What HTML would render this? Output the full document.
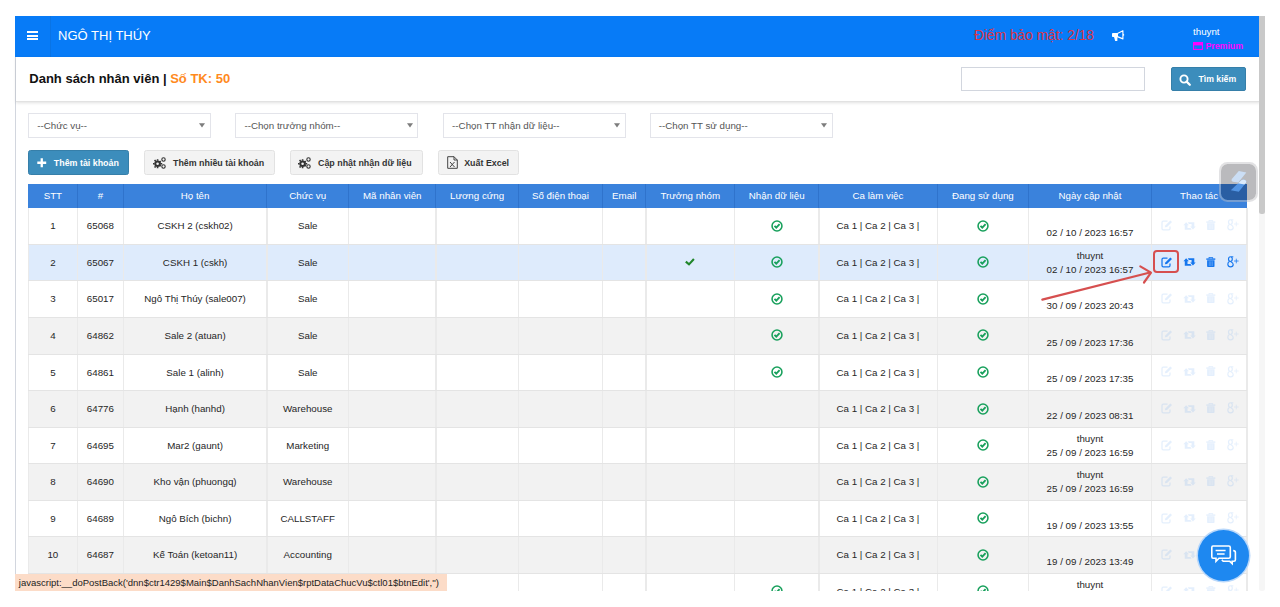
<!DOCTYPE html>
<html><head><meta charset="utf-8">
<style>
*{box-sizing:border-box;margin:0;padding:0}
html,body{width:1280px;height:607px;overflow:hidden;background:#fff;font-family:"Liberation Sans",sans-serif;color:#333}
.abs{position:absolute}
#hdr{position:absolute;left:15px;top:16px;width:1244.5px;height:40.8px;background:#077bf7}
#hdr .sep{position:absolute;left:34.5px;top:0;width:1px;height:40.8px;background:#0b6fd9;opacity:.6}
.bar{position:absolute;left:12px;width:11px;height:2px;background:#fff}
#ttl{position:absolute;left:43.1px;top:12px;font-size:13px;color:#fff;white-space:nowrap;line-height:15px}
#leftline{position:absolute;left:15px;top:56.8px;width:1px;height:517px;background:#d2d6de}
#panel{position:absolute;left:16px;top:56.8px;width:1243.5px;height:45.3px;background:#fff;border-bottom:1px solid #e2e2e2;box-shadow:0 1px 3px rgba(0,0,0,.12)}
.title{position:absolute;left:29.3px;top:70.9px;font-size:13px;font-weight:bold;color:#111;white-space:nowrap;line-height:15px}
.title span{color:#ff8a1e}
.sel{position:absolute;top:112.8px;height:24.9px;width:183px;border:1px solid #e3e4ea;background:#fff;font-size:9.75px;color:#555;line-height:23px;padding-left:8px;white-space:nowrap}
.sel svg{position:absolute;right:4.8px;top:9.3px}
.btn{position:absolute;top:150.1px;height:24.9px;border:1px solid #e2e2e2;border-radius:2.5px;background:#f3f3f3;font-size:8.9px;font-weight:bold;color:#333;line-height:24.2px;white-space:nowrap}
.btn svg{position:absolute}
.btn b{position:absolute;top:0}
.th{position:absolute;top:184.3px;height:23.3px;padding-bottom:1.5px;color:#fff;font-size:9.75px;text-align:center;line-height:23px;white-space:nowrap}
.row{position:absolute;left:28.3px;width:1218.5px}
.td{position:absolute;top:0;height:100%;padding-top:0.6px;font-size:9.75px;color:#262626;text-align:center;white-space:nowrap;display:flex;align-items:center;justify-content:center;line-height:13.8px}
.td2{flex-direction:column}
.ic{position:absolute}
</style></head><body>

<div id="hdr"><div class="sep"></div><div class="bar" style="top:15.2px"></div><div class="bar" style="top:18.7px"></div><div class="bar" style="top:22.2px"></div><div id="ttl">NGÔ THỊ THÚY</div><div class="abs" style="left:959px;top:11.7px;font-size:13.75px;color:#dc3545;white-space:nowrap;line-height:16px">Điểm bảo mật: 2/18</div><svg class="abs" style="left:1096px;top:13px" width="14" height="13" viewBox="0 0 14 13"><path d="M1.8 4 H6.6 V8.1 H1.8 Q1 8.1 1 7.3 V4.8 Q1 4 1.8 4 Z" fill="#fff"/><path d="M3 8 H6.5 L6.3 11.9 H4.2 Z" fill="#fff"/><path d="M6.4 4.4 L11.9 1.7 V9.9 L6.4 7.6 Z" fill="none" stroke="#fff" stroke-width="1.15" stroke-linejoin="round"/><rect x="12.1" y="4.9" width="1" height="1.8" fill="#fff"/></svg><div class="abs" style="left:1178px;top:9.6px;font-size:9.75px;color:#fff;white-space:nowrap;line-height:12px">thuynt</div><svg class="abs" style="left:1177.5px;top:26.4px" width="10" height="8" viewBox="0 0 10 8"><rect x="0.55" y="0.55" width="8.9" height="6.9" fill="none" stroke="#f0f" stroke-width="1.1"/><rect x="0.5" y="0.5" width="9" height="2.9" fill="#f0f"/><rect x="1.8" y="5.6" width="2" height="0.8" fill="#f0f" fill-opacity="0.6"/></svg><div class="abs" style="left:1190.4px;top:24.3px;font-size:8.8px;font-weight:bold;color:#f0f;white-space:nowrap;line-height:12px">Premium</div></div>
<div id="leftline"></div>
<div id="panel"></div>
<div class="title">Danh sách nhân viên | <span>Số TK: 50</span></div>
<div class="abs" style="left:961px;top:67.3px;width:184px;height:24px;border:1px solid #d2d6de;background:#fff"></div>
<div class="abs" style="left:1171px;top:67.3px;width:74.8px;height:23.8px;background:#3c8dbc;border:1px solid #367fa9;border-radius:2px"></div>
<svg class="abs" style="left:1179px;top:73.5px" width="12" height="12" viewBox="0 0 12 12"><circle cx="5" cy="5" r="3.6" fill="none" stroke="#fff" stroke-width="1.9"/><path d="M7.6 7.6 L10.8 10.8" stroke="#fff" stroke-width="2.2" stroke-linecap="round"/></svg>
<div class="abs" style="left:1198.5px;top:73px;font-size:8.7px;font-weight:bold;color:#fff;white-space:nowrap;line-height:12px">Tìm kiếm</div>
<div class="sel" style="left:28.2px">--Chức vụ--<svg width="6" height="5" viewBox="0 0 6 5"><path d="M0 0.2 H6 L3 4.6 Z" fill="#7d7d7d"/></svg></div>
<div class="sel" style="left:235.4px">--Chọn trưởng nhóm--<svg width="6" height="5" viewBox="0 0 6 5"><path d="M0 0.2 H6 L3 4.6 Z" fill="#7d7d7d"/></svg></div>
<div class="sel" style="left:443.1px">--Chọn TT nhận dữ liệu--<svg width="6" height="5" viewBox="0 0 6 5"><path d="M0 0.2 H6 L3 4.6 Z" fill="#7d7d7d"/></svg></div>
<div class="sel" style="left:649.7px">--Chọn TT sử dụng--<svg width="6" height="5" viewBox="0 0 6 5"><path d="M0 0.2 H6 L3 4.6 Z" fill="#7d7d7d"/></svg></div>
<div class="btn" style="left:28.3px;width:100.7px;background:#3c8dbc;border-color:#367fa9;color:#fff"><svg style="left:7.9px;top:6.8px" width="10" height="10" viewBox="0 0 10 10"><path d="M3.6 0.3 H5.9 V3.6 H9.2 V5.9 H5.9 V9.2 H3.6 V5.9 H0.3 V3.6 H3.6 Z" fill="#fff"/></svg><b style="left:24.5px">Thêm tài khoản</b></div>
<div class="btn" style="left:144.4px;width:130.4px"><svg style="left:7.5px;top:6px" width="13" height="12" viewBox="0 0 13 12"><g fill="#333"><circle cx="4.6" cy="6.8" r="3.3"/><path d="M3.8 2.3h1.6v1.5h-1.6zM3.8 9.8h1.6v1.5h-1.6zM0 6h1.5v1.6H0zM7.7 6h1.5v1.6H7.7zM1 3.6l1.1-1.1 1.1 1.1-1.1 1.1zM6.1 8.7l1.1-1.1 1.1 1.1-1.1 1.1zM1 9.9l1.1-1.1 1.1 1.1-1.1 1.1zM6.1 4.7l1.1-1.1 1.1 1.1-1.1 1.1z"/></g><circle cx="4.6" cy="6.8" r="1.3" fill="#f4f4f4"/><circle cx="10.5" cy="2.5" r="1.7" fill="none" stroke="#333" stroke-width="1.1"/><circle cx="10.5" cy="9.5" r="1.7" fill="none" stroke="#333" stroke-width="1.1"/></svg><b style="left:27.6px">Thêm nhiều tài khoản</b></div>
<div class="btn" style="left:290.2px;width:132.5px"><svg style="left:7px;top:6px" width="13" height="12" viewBox="0 0 13 12"><g fill="#333"><circle cx="4.6" cy="6.8" r="3.3"/><path d="M3.8 2.3h1.6v1.5h-1.6zM3.8 9.8h1.6v1.5h-1.6zM0 6h1.5v1.6H0zM7.7 6h1.5v1.6H7.7zM1 3.6l1.1-1.1 1.1 1.1-1.1 1.1zM6.1 8.7l1.1-1.1 1.1 1.1-1.1 1.1zM1 9.9l1.1-1.1 1.1 1.1-1.1 1.1zM6.1 4.7l1.1-1.1 1.1 1.1-1.1 1.1z"/></g><circle cx="4.6" cy="6.8" r="1.3" fill="#f4f4f4"/><circle cx="10.5" cy="2.5" r="1.7" fill="none" stroke="#333" stroke-width="1.1"/><circle cx="10.5" cy="9.5" r="1.7" fill="none" stroke="#333" stroke-width="1.1"/></svg><b style="left:26.8px">Cập nhật nhận dữ liệu</b></div>
<div class="btn" style="left:437.7px;width:81.6px"><svg style="left:8px;top:5px" width="11" height="13" viewBox="0 0 11 13"><path d="M0.7 0.7 H7 L10.3 4 V12.3 H0.7 Z" fill="none" stroke="#444" stroke-width="1"/><path d="M7 0.7 V4 H10.3" fill="none" stroke="#444" stroke-width="1"/><path d="M3 6 L7.5 11 M7.5 6 L3 11" stroke="#444" stroke-width="1"/></svg><b style="left:25.5px">Xuất Excel</b></div>
<div class="abs" style="left:28.2px;top:184.3px;width:1218.6px;height:23.3px;background:#3a82dc"></div>
<div class="abs" style="left:76.9px;top:184.3px;width:1px;height:23.3px;background:#2f73cc"></div>
<div class="abs" style="left:122.9px;top:184.3px;width:1px;height:23.3px;background:#2f73cc"></div>
<div class="abs" style="left:266.3px;top:184.3px;width:1px;height:23.3px;background:#2f73cc"></div>
<div class="abs" style="left:348.2px;top:184.3px;width:1px;height:23.3px;background:#2f73cc"></div>
<div class="abs" style="left:435.4px;top:184.3px;width:1px;height:23.3px;background:#2f73cc"></div>
<div class="abs" style="left:517.8px;top:184.3px;width:1px;height:23.3px;background:#2f73cc"></div>
<div class="abs" style="left:602.1px;top:184.3px;width:1px;height:23.3px;background:#2f73cc"></div>
<div class="abs" style="left:645.4px;top:184.3px;width:1px;height:23.3px;background:#2f73cc"></div>
<div class="abs" style="left:734.1px;top:184.3px;width:1px;height:23.3px;background:#2f73cc"></div>
<div class="abs" style="left:818.3px;top:184.3px;width:1px;height:23.3px;background:#2f73cc"></div>
<div class="abs" style="left:936.6px;top:184.3px;width:1px;height:23.3px;background:#2f73cc"></div>
<div class="abs" style="left:1028.1px;top:184.3px;width:1px;height:23.3px;background:#2f73cc"></div>
<div class="abs" style="left:1150.9px;top:184.3px;width:1px;height:23.3px;background:#2f73cc"></div>
<div class="th" style="left:28.3px;width:49.10000000000001px">STT</div>
<div class="th" style="left:77.4px;width:46.0px">#</div>
<div class="th" style="left:123.4px;width:143.4px">Họ tên</div>
<div class="th" style="left:266.8px;width:81.89999999999998px">Chức vụ</div>
<div class="th" style="left:348.7px;width:87.19999999999999px">Mã nhân viên</div>
<div class="th" style="left:435.9px;width:82.39999999999998px">Lương cứng</div>
<div class="th" style="left:518.3px;width:84.30000000000007px">Số điện thoại</div>
<div class="th" style="left:602.6px;width:43.299999999999955px">Email</div>
<div class="th" style="left:645.9px;width:88.70000000000005px">Trưởng nhóm</div>
<div class="th" style="left:734.6px;width:84.19999999999993px">Nhận dữ liệu</div>
<div class="th" style="left:818.8px;width:118.30000000000007px">Ca làm việc</div>
<div class="th" style="left:937.1px;width:91.49999999999989px">Đang sử dụng</div>
<div class="th" style="left:1028.6px;width:122.80000000000018px">Ngày cập nhật</div>
<div class="th" style="left:1151.4px;width:95.39999999999986px">Thao tác</div>
<div class="row" style="top:207.60px;height:36.57px;background:#fff">
<div class="td" style="left:0.0px;width:49.1px">1</div>
<div class="td" style="left:49.1px;width:46.0px">65068</div>
<div class="td" style="left:95.1px;width:143.4px">CSKH 2 (cskh02)</div>
<div class="td" style="left:238.5px;width:81.9px">Sale</div>
<div class="td" style="left:320.4px;width:87.2px"></div>
<div class="td" style="left:407.6px;width:82.4px"></div>
<div class="td" style="left:490.0px;width:84.3px"></div>
<div class="td" style="left:574.3px;width:43.3px"></div>
<div class="td" style="left:617.6px;width:88.7px"></div>
<div class="td" style="left:706.3px;width:84.2px"><svg width="12" height="12" viewBox="0 0 12 12" style="margin-left:0.5px;margin-top:-1px"><circle cx="6" cy="6" r="4.95" fill="none" stroke="#18a05c" stroke-width="1.55"/><path d="M3.5 5.8 L5.3 7.6 L8.6 4.2" fill="none" stroke="#18a05c" stroke-width="1.9"/></svg></div>
<div class="td" style="left:790.5px;width:118.3px">Ca 1 | Ca 2 | Ca 3 |</div>
<div class="td" style="left:908.8px;width:91.5px"><svg width="12" height="12" viewBox="0 0 12 12" style="margin-left:0.5px;margin-top:-1px"><circle cx="6" cy="6" r="4.95" fill="none" stroke="#18a05c" stroke-width="1.55"/><path d="M3.5 5.8 L5.3 7.6 L8.6 4.2" fill="none" stroke="#18a05c" stroke-width="1.9"/></svg></div>
<div class="td td2" style="left:1000.3px;width:122.8px"><div style="height:13.8px"></div><div style="height:13.8px">02 / 10 / 2023 16:57</div></div>
<div class="abs" style="left:1132.6px;top:12.5px;width:80px;height:11px"><div style="position:absolute;left:0;top:0;width:100%;height:100%;opacity:0.11"><svg class="ic" style="left:0px;top:0px" width="13" height="11" viewBox="0 0 13 11"><path d="M6.5 1.1 H2.3 Q1 1.1 1 2.4 V8.6 Q1 9.9 2.3 9.9 H7.7 Q9 9.9 9 8.6 V6.6" fill="none" stroke="#1677ee" stroke-width="1.25"/><path d="M3.9 7.3 L4.3 5.4 L9.3 0.4 L11 2.1 L6 7.1 Z" fill="#1677ee"/></svg><svg class="ic" style="left:22.4px;top:1.6px" width="13.6" height="8.6" viewBox="0 0 13 9" preserveAspectRatio="none"><path d="M0.4 3.5 L3 0.3 L5.6 3.5 H4.3 V6.3 H7.2 L8.2 8 H1.7 V3.5 Z" fill="#1677ee"/><path d="M12.1 4.6 L9.5 7.9 L6.9 4.6 H8.2 V2 H5.6 L4.6 0.3 H10.8 V4.6 Z" fill="#1677ee"/></svg><svg class="ic" style="left:45.6px;top:0px" width="10" height="11" viewBox="0 0 10 11"><path d="M3 1.6 V0.3 H6.6 V1.6" fill="none" stroke="#1677ee" stroke-width="1"/><rect x="0.3" y="1.4" width="9" height="1.4" fill="#1677ee"/><path d="M1.1 3.3 H8.5 V9.2 Q8.5 10 7.7 10 H1.9 Q1.1 10 1.1 9.2 Z" fill="#1677ee"/><path d="M3.3 4.3 V9 M4.8 4.3 V9 M6.3 4.3 V9" stroke="#deebfc" stroke-opacity="0.55" stroke-width="0.6"/></svg><svg class="ic" style="left:66px;top:-0.7px" width="12" height="12" viewBox="0 0 12 12"><ellipse cx="3.4" cy="3.1" rx="1.9" ry="2.35" fill="none" stroke="#1677ee" stroke-width="1.15"/><path d="M2.4 5.6 Q0.6 6.6 0.9 8.7 Q1.2 10.8 3.5 10.8 Q6.1 10.8 6.2 8.6 Q6.2 6.8 3.8 5.8" fill="none" stroke="#1677ee" stroke-width="1.15"/><path d="M4.2 0.8 H6.3" stroke="#1677ee" stroke-width="1"/><path d="M7 5 H11.6 M9.3 2.7 V7.3" stroke="#1677ee" stroke-width="0.75"/></svg></div></div>
</div>
<div class="row" style="top:244.17px;height:36.57px;background:#deebfc">
<div class="td" style="left:0.0px;width:49.1px">2</div>
<div class="td" style="left:49.1px;width:46.0px">65067</div>
<div class="td" style="left:95.1px;width:143.4px">CSKH 1 (cskh)</div>
<div class="td" style="left:238.5px;width:81.9px">Sale</div>
<div class="td" style="left:320.4px;width:87.2px"></div>
<div class="td" style="left:407.6px;width:82.4px"></div>
<div class="td" style="left:490.0px;width:84.3px"></div>
<div class="td" style="left:574.3px;width:43.3px"></div>
<div class="td" style="left:617.6px;width:88.7px"><svg width="10" height="8" viewBox="0 0 10 8" style="margin-left:0.5px;margin-top:-0.5px"><path d="M0.8 3.6 L4 6.4 L8.9 1" fill="none" stroke="#21862a" stroke-width="2.1"/></svg></div>
<div class="td" style="left:706.3px;width:84.2px"><svg width="12" height="12" viewBox="0 0 12 12" style="margin-left:0.5px;margin-top:-1px"><circle cx="6" cy="6" r="4.95" fill="none" stroke="#18a05c" stroke-width="1.55"/><path d="M3.5 5.8 L5.3 7.6 L8.6 4.2" fill="none" stroke="#18a05c" stroke-width="1.9"/></svg></div>
<div class="td" style="left:790.5px;width:118.3px">Ca 1 | Ca 2 | Ca 3 |</div>
<div class="td" style="left:908.8px;width:91.5px"><svg width="12" height="12" viewBox="0 0 12 12" style="margin-left:0.5px;margin-top:-1px"><circle cx="6" cy="6" r="4.95" fill="none" stroke="#18a05c" stroke-width="1.55"/><path d="M3.5 5.8 L5.3 7.6 L8.6 4.2" fill="none" stroke="#18a05c" stroke-width="1.9"/></svg></div>
<div class="td td2" style="left:1000.3px;width:122.8px"><div style="height:13.8px">thuynt</div><div style="height:13.8px">02 / 10 / 2023 16:57</div></div>
<div class="abs" style="left:1132.6px;top:12.5px;width:80px;height:11px"><svg class="ic" style="left:0px;top:0px" width="13" height="11" viewBox="0 0 13 11"><path d="M6.5 1.1 H2.3 Q1 1.1 1 2.4 V8.6 Q1 9.9 2.3 9.9 H7.7 Q9 9.9 9 8.6 V6.6" fill="none" stroke="#1677ee" stroke-width="1.25"/><path d="M3.9 7.3 L4.3 5.4 L9.3 0.4 L11 2.1 L6 7.1 Z" fill="#1677ee"/></svg><svg class="ic" style="left:22.4px;top:1.6px" width="13.6" height="8.6" viewBox="0 0 13 9" preserveAspectRatio="none"><path d="M0.4 3.5 L3 0.3 L5.6 3.5 H4.3 V6.3 H7.2 L8.2 8 H1.7 V3.5 Z" fill="#1677ee"/><path d="M12.1 4.6 L9.5 7.9 L6.9 4.6 H8.2 V2 H5.6 L4.6 0.3 H10.8 V4.6 Z" fill="#1677ee"/></svg><svg class="ic" style="left:45.6px;top:0px" width="10" height="11" viewBox="0 0 10 11"><path d="M3 1.6 V0.3 H6.6 V1.6" fill="none" stroke="#1677ee" stroke-width="1"/><rect x="0.3" y="1.4" width="9" height="1.4" fill="#1677ee"/><path d="M1.1 3.3 H8.5 V9.2 Q8.5 10 7.7 10 H1.9 Q1.1 10 1.1 9.2 Z" fill="#1677ee"/><path d="M3.3 4.3 V9 M4.8 4.3 V9 M6.3 4.3 V9" stroke="#deebfc" stroke-opacity="0.55" stroke-width="0.6"/></svg><svg class="ic" style="left:66px;top:-0.7px" width="12" height="12" viewBox="0 0 12 12"><ellipse cx="3.4" cy="3.1" rx="1.9" ry="2.35" fill="none" stroke="#1677ee" stroke-width="1.15"/><path d="M2.4 5.6 Q0.6 6.6 0.9 8.7 Q1.2 10.8 3.5 10.8 Q6.1 10.8 6.2 8.6 Q6.2 6.8 3.8 5.8" fill="none" stroke="#1677ee" stroke-width="1.15"/><path d="M4.2 0.8 H6.3" stroke="#1677ee" stroke-width="1"/><path d="M7 5 H11.6 M9.3 2.7 V7.3" stroke="#1677ee" stroke-width="0.75"/></svg></div>
</div>
<div class="row" style="top:280.74px;height:36.57px;background:#fff">
<div class="td" style="left:0.0px;width:49.1px">3</div>
<div class="td" style="left:49.1px;width:46.0px">65017</div>
<div class="td" style="left:95.1px;width:143.4px">Ngô Thị Thúy (sale007)</div>
<div class="td" style="left:238.5px;width:81.9px">Sale</div>
<div class="td" style="left:320.4px;width:87.2px"></div>
<div class="td" style="left:407.6px;width:82.4px"></div>
<div class="td" style="left:490.0px;width:84.3px"></div>
<div class="td" style="left:574.3px;width:43.3px"></div>
<div class="td" style="left:617.6px;width:88.7px"></div>
<div class="td" style="left:706.3px;width:84.2px"><svg width="12" height="12" viewBox="0 0 12 12" style="margin-left:0.5px;margin-top:-1px"><circle cx="6" cy="6" r="4.95" fill="none" stroke="#18a05c" stroke-width="1.55"/><path d="M3.5 5.8 L5.3 7.6 L8.6 4.2" fill="none" stroke="#18a05c" stroke-width="1.9"/></svg></div>
<div class="td" style="left:790.5px;width:118.3px">Ca 1 | Ca 2 | Ca 3 |</div>
<div class="td" style="left:908.8px;width:91.5px"><svg width="12" height="12" viewBox="0 0 12 12" style="margin-left:0.5px;margin-top:-1px"><circle cx="6" cy="6" r="4.95" fill="none" stroke="#18a05c" stroke-width="1.55"/><path d="M3.5 5.8 L5.3 7.6 L8.6 4.2" fill="none" stroke="#18a05c" stroke-width="1.9"/></svg></div>
<div class="td td2" style="left:1000.3px;width:122.8px"><div style="height:13.8px"></div><div style="height:13.8px">30 / 09 / 2023 20:43</div></div>
<div class="abs" style="left:1132.6px;top:12.5px;width:80px;height:11px"><div style="position:absolute;left:0;top:0;width:100%;height:100%;opacity:0.11"><svg class="ic" style="left:0px;top:0px" width="13" height="11" viewBox="0 0 13 11"><path d="M6.5 1.1 H2.3 Q1 1.1 1 2.4 V8.6 Q1 9.9 2.3 9.9 H7.7 Q9 9.9 9 8.6 V6.6" fill="none" stroke="#1677ee" stroke-width="1.25"/><path d="M3.9 7.3 L4.3 5.4 L9.3 0.4 L11 2.1 L6 7.1 Z" fill="#1677ee"/></svg><svg class="ic" style="left:22.4px;top:1.6px" width="13.6" height="8.6" viewBox="0 0 13 9" preserveAspectRatio="none"><path d="M0.4 3.5 L3 0.3 L5.6 3.5 H4.3 V6.3 H7.2 L8.2 8 H1.7 V3.5 Z" fill="#1677ee"/><path d="M12.1 4.6 L9.5 7.9 L6.9 4.6 H8.2 V2 H5.6 L4.6 0.3 H10.8 V4.6 Z" fill="#1677ee"/></svg><svg class="ic" style="left:45.6px;top:0px" width="10" height="11" viewBox="0 0 10 11"><path d="M3 1.6 V0.3 H6.6 V1.6" fill="none" stroke="#1677ee" stroke-width="1"/><rect x="0.3" y="1.4" width="9" height="1.4" fill="#1677ee"/><path d="M1.1 3.3 H8.5 V9.2 Q8.5 10 7.7 10 H1.9 Q1.1 10 1.1 9.2 Z" fill="#1677ee"/><path d="M3.3 4.3 V9 M4.8 4.3 V9 M6.3 4.3 V9" stroke="#deebfc" stroke-opacity="0.55" stroke-width="0.6"/></svg><svg class="ic" style="left:66px;top:-0.7px" width="12" height="12" viewBox="0 0 12 12"><ellipse cx="3.4" cy="3.1" rx="1.9" ry="2.35" fill="none" stroke="#1677ee" stroke-width="1.15"/><path d="M2.4 5.6 Q0.6 6.6 0.9 8.7 Q1.2 10.8 3.5 10.8 Q6.1 10.8 6.2 8.6 Q6.2 6.8 3.8 5.8" fill="none" stroke="#1677ee" stroke-width="1.15"/><path d="M4.2 0.8 H6.3" stroke="#1677ee" stroke-width="1"/><path d="M7 5 H11.6 M9.3 2.7 V7.3" stroke="#1677ee" stroke-width="0.75"/></svg></div></div>
</div>
<div class="row" style="top:317.31px;height:36.57px;background:#f2f2f2">
<div class="td" style="left:0.0px;width:49.1px">4</div>
<div class="td" style="left:49.1px;width:46.0px">64862</div>
<div class="td" style="left:95.1px;width:143.4px">Sale 2 (atuan)</div>
<div class="td" style="left:238.5px;width:81.9px">Sale</div>
<div class="td" style="left:320.4px;width:87.2px"></div>
<div class="td" style="left:407.6px;width:82.4px"></div>
<div class="td" style="left:490.0px;width:84.3px"></div>
<div class="td" style="left:574.3px;width:43.3px"></div>
<div class="td" style="left:617.6px;width:88.7px"></div>
<div class="td" style="left:706.3px;width:84.2px"><svg width="12" height="12" viewBox="0 0 12 12" style="margin-left:0.5px;margin-top:-1px"><circle cx="6" cy="6" r="4.95" fill="none" stroke="#18a05c" stroke-width="1.55"/><path d="M3.5 5.8 L5.3 7.6 L8.6 4.2" fill="none" stroke="#18a05c" stroke-width="1.9"/></svg></div>
<div class="td" style="left:790.5px;width:118.3px">Ca 1 | Ca 2 | Ca 3 |</div>
<div class="td" style="left:908.8px;width:91.5px"><svg width="12" height="12" viewBox="0 0 12 12" style="margin-left:0.5px;margin-top:-1px"><circle cx="6" cy="6" r="4.95" fill="none" stroke="#18a05c" stroke-width="1.55"/><path d="M3.5 5.8 L5.3 7.6 L8.6 4.2" fill="none" stroke="#18a05c" stroke-width="1.9"/></svg></div>
<div class="td td2" style="left:1000.3px;width:122.8px"><div style="height:13.8px"></div><div style="height:13.8px">25 / 09 / 2023 17:36</div></div>
<div class="abs" style="left:1132.6px;top:12.5px;width:80px;height:11px"><div style="position:absolute;left:0;top:0;width:100%;height:100%;opacity:0.11"><svg class="ic" style="left:0px;top:0px" width="13" height="11" viewBox="0 0 13 11"><path d="M6.5 1.1 H2.3 Q1 1.1 1 2.4 V8.6 Q1 9.9 2.3 9.9 H7.7 Q9 9.9 9 8.6 V6.6" fill="none" stroke="#1677ee" stroke-width="1.25"/><path d="M3.9 7.3 L4.3 5.4 L9.3 0.4 L11 2.1 L6 7.1 Z" fill="#1677ee"/></svg><svg class="ic" style="left:22.4px;top:1.6px" width="13.6" height="8.6" viewBox="0 0 13 9" preserveAspectRatio="none"><path d="M0.4 3.5 L3 0.3 L5.6 3.5 H4.3 V6.3 H7.2 L8.2 8 H1.7 V3.5 Z" fill="#1677ee"/><path d="M12.1 4.6 L9.5 7.9 L6.9 4.6 H8.2 V2 H5.6 L4.6 0.3 H10.8 V4.6 Z" fill="#1677ee"/></svg><svg class="ic" style="left:45.6px;top:0px" width="10" height="11" viewBox="0 0 10 11"><path d="M3 1.6 V0.3 H6.6 V1.6" fill="none" stroke="#1677ee" stroke-width="1"/><rect x="0.3" y="1.4" width="9" height="1.4" fill="#1677ee"/><path d="M1.1 3.3 H8.5 V9.2 Q8.5 10 7.7 10 H1.9 Q1.1 10 1.1 9.2 Z" fill="#1677ee"/><path d="M3.3 4.3 V9 M4.8 4.3 V9 M6.3 4.3 V9" stroke="#deebfc" stroke-opacity="0.55" stroke-width="0.6"/></svg><svg class="ic" style="left:66px;top:-0.7px" width="12" height="12" viewBox="0 0 12 12"><ellipse cx="3.4" cy="3.1" rx="1.9" ry="2.35" fill="none" stroke="#1677ee" stroke-width="1.15"/><path d="M2.4 5.6 Q0.6 6.6 0.9 8.7 Q1.2 10.8 3.5 10.8 Q6.1 10.8 6.2 8.6 Q6.2 6.8 3.8 5.8" fill="none" stroke="#1677ee" stroke-width="1.15"/><path d="M4.2 0.8 H6.3" stroke="#1677ee" stroke-width="1"/><path d="M7 5 H11.6 M9.3 2.7 V7.3" stroke="#1677ee" stroke-width="0.75"/></svg></div></div>
</div>
<div class="row" style="top:353.88px;height:36.57px;background:#fff">
<div class="td" style="left:0.0px;width:49.1px">5</div>
<div class="td" style="left:49.1px;width:46.0px">64861</div>
<div class="td" style="left:95.1px;width:143.4px">Sale 1 (alinh)</div>
<div class="td" style="left:238.5px;width:81.9px">Sale</div>
<div class="td" style="left:320.4px;width:87.2px"></div>
<div class="td" style="left:407.6px;width:82.4px"></div>
<div class="td" style="left:490.0px;width:84.3px"></div>
<div class="td" style="left:574.3px;width:43.3px"></div>
<div class="td" style="left:617.6px;width:88.7px"></div>
<div class="td" style="left:706.3px;width:84.2px"><svg width="12" height="12" viewBox="0 0 12 12" style="margin-left:0.5px;margin-top:-1px"><circle cx="6" cy="6" r="4.95" fill="none" stroke="#18a05c" stroke-width="1.55"/><path d="M3.5 5.8 L5.3 7.6 L8.6 4.2" fill="none" stroke="#18a05c" stroke-width="1.9"/></svg></div>
<div class="td" style="left:790.5px;width:118.3px">Ca 1 | Ca 2 | Ca 3 |</div>
<div class="td" style="left:908.8px;width:91.5px"><svg width="12" height="12" viewBox="0 0 12 12" style="margin-left:0.5px;margin-top:-1px"><circle cx="6" cy="6" r="4.95" fill="none" stroke="#18a05c" stroke-width="1.55"/><path d="M3.5 5.8 L5.3 7.6 L8.6 4.2" fill="none" stroke="#18a05c" stroke-width="1.9"/></svg></div>
<div class="td td2" style="left:1000.3px;width:122.8px"><div style="height:13.8px"></div><div style="height:13.8px">25 / 09 / 2023 17:35</div></div>
<div class="abs" style="left:1132.6px;top:12.5px;width:80px;height:11px"><div style="position:absolute;left:0;top:0;width:100%;height:100%;opacity:0.11"><svg class="ic" style="left:0px;top:0px" width="13" height="11" viewBox="0 0 13 11"><path d="M6.5 1.1 H2.3 Q1 1.1 1 2.4 V8.6 Q1 9.9 2.3 9.9 H7.7 Q9 9.9 9 8.6 V6.6" fill="none" stroke="#1677ee" stroke-width="1.25"/><path d="M3.9 7.3 L4.3 5.4 L9.3 0.4 L11 2.1 L6 7.1 Z" fill="#1677ee"/></svg><svg class="ic" style="left:22.4px;top:1.6px" width="13.6" height="8.6" viewBox="0 0 13 9" preserveAspectRatio="none"><path d="M0.4 3.5 L3 0.3 L5.6 3.5 H4.3 V6.3 H7.2 L8.2 8 H1.7 V3.5 Z" fill="#1677ee"/><path d="M12.1 4.6 L9.5 7.9 L6.9 4.6 H8.2 V2 H5.6 L4.6 0.3 H10.8 V4.6 Z" fill="#1677ee"/></svg><svg class="ic" style="left:45.6px;top:0px" width="10" height="11" viewBox="0 0 10 11"><path d="M3 1.6 V0.3 H6.6 V1.6" fill="none" stroke="#1677ee" stroke-width="1"/><rect x="0.3" y="1.4" width="9" height="1.4" fill="#1677ee"/><path d="M1.1 3.3 H8.5 V9.2 Q8.5 10 7.7 10 H1.9 Q1.1 10 1.1 9.2 Z" fill="#1677ee"/><path d="M3.3 4.3 V9 M4.8 4.3 V9 M6.3 4.3 V9" stroke="#deebfc" stroke-opacity="0.55" stroke-width="0.6"/></svg><svg class="ic" style="left:66px;top:-0.7px" width="12" height="12" viewBox="0 0 12 12"><ellipse cx="3.4" cy="3.1" rx="1.9" ry="2.35" fill="none" stroke="#1677ee" stroke-width="1.15"/><path d="M2.4 5.6 Q0.6 6.6 0.9 8.7 Q1.2 10.8 3.5 10.8 Q6.1 10.8 6.2 8.6 Q6.2 6.8 3.8 5.8" fill="none" stroke="#1677ee" stroke-width="1.15"/><path d="M4.2 0.8 H6.3" stroke="#1677ee" stroke-width="1"/><path d="M7 5 H11.6 M9.3 2.7 V7.3" stroke="#1677ee" stroke-width="0.75"/></svg></div></div>
</div>
<div class="row" style="top:390.45px;height:36.57px;background:#f2f2f2">
<div class="td" style="left:0.0px;width:49.1px">6</div>
<div class="td" style="left:49.1px;width:46.0px">64776</div>
<div class="td" style="left:95.1px;width:143.4px">Hạnh (hanhd)</div>
<div class="td" style="left:238.5px;width:81.9px">Warehouse</div>
<div class="td" style="left:320.4px;width:87.2px"></div>
<div class="td" style="left:407.6px;width:82.4px"></div>
<div class="td" style="left:490.0px;width:84.3px"></div>
<div class="td" style="left:574.3px;width:43.3px"></div>
<div class="td" style="left:617.6px;width:88.7px"></div>
<div class="td" style="left:706.3px;width:84.2px"></div>
<div class="td" style="left:790.5px;width:118.3px">Ca 1 | Ca 2 | Ca 3 |</div>
<div class="td" style="left:908.8px;width:91.5px"><svg width="12" height="12" viewBox="0 0 12 12" style="margin-left:0.5px;margin-top:-1px"><circle cx="6" cy="6" r="4.95" fill="none" stroke="#18a05c" stroke-width="1.55"/><path d="M3.5 5.8 L5.3 7.6 L8.6 4.2" fill="none" stroke="#18a05c" stroke-width="1.9"/></svg></div>
<div class="td td2" style="left:1000.3px;width:122.8px"><div style="height:13.8px"></div><div style="height:13.8px">22 / 09 / 2023 08:31</div></div>
<div class="abs" style="left:1132.6px;top:12.5px;width:80px;height:11px"><div style="position:absolute;left:0;top:0;width:100%;height:100%;opacity:0.11"><svg class="ic" style="left:0px;top:0px" width="13" height="11" viewBox="0 0 13 11"><path d="M6.5 1.1 H2.3 Q1 1.1 1 2.4 V8.6 Q1 9.9 2.3 9.9 H7.7 Q9 9.9 9 8.6 V6.6" fill="none" stroke="#1677ee" stroke-width="1.25"/><path d="M3.9 7.3 L4.3 5.4 L9.3 0.4 L11 2.1 L6 7.1 Z" fill="#1677ee"/></svg><svg class="ic" style="left:22.4px;top:1.6px" width="13.6" height="8.6" viewBox="0 0 13 9" preserveAspectRatio="none"><path d="M0.4 3.5 L3 0.3 L5.6 3.5 H4.3 V6.3 H7.2 L8.2 8 H1.7 V3.5 Z" fill="#1677ee"/><path d="M12.1 4.6 L9.5 7.9 L6.9 4.6 H8.2 V2 H5.6 L4.6 0.3 H10.8 V4.6 Z" fill="#1677ee"/></svg><svg class="ic" style="left:45.6px;top:0px" width="10" height="11" viewBox="0 0 10 11"><path d="M3 1.6 V0.3 H6.6 V1.6" fill="none" stroke="#1677ee" stroke-width="1"/><rect x="0.3" y="1.4" width="9" height="1.4" fill="#1677ee"/><path d="M1.1 3.3 H8.5 V9.2 Q8.5 10 7.7 10 H1.9 Q1.1 10 1.1 9.2 Z" fill="#1677ee"/><path d="M3.3 4.3 V9 M4.8 4.3 V9 M6.3 4.3 V9" stroke="#deebfc" stroke-opacity="0.55" stroke-width="0.6"/></svg><svg class="ic" style="left:66px;top:-0.7px" width="12" height="12" viewBox="0 0 12 12"><ellipse cx="3.4" cy="3.1" rx="1.9" ry="2.35" fill="none" stroke="#1677ee" stroke-width="1.15"/><path d="M2.4 5.6 Q0.6 6.6 0.9 8.7 Q1.2 10.8 3.5 10.8 Q6.1 10.8 6.2 8.6 Q6.2 6.8 3.8 5.8" fill="none" stroke="#1677ee" stroke-width="1.15"/><path d="M4.2 0.8 H6.3" stroke="#1677ee" stroke-width="1"/><path d="M7 5 H11.6 M9.3 2.7 V7.3" stroke="#1677ee" stroke-width="0.75"/></svg></div></div>
</div>
<div class="row" style="top:427.02px;height:36.57px;background:#fff">
<div class="td" style="left:0.0px;width:49.1px">7</div>
<div class="td" style="left:49.1px;width:46.0px">64695</div>
<div class="td" style="left:95.1px;width:143.4px">Mar2 (gaunt)</div>
<div class="td" style="left:238.5px;width:81.9px">Marketing</div>
<div class="td" style="left:320.4px;width:87.2px"></div>
<div class="td" style="left:407.6px;width:82.4px"></div>
<div class="td" style="left:490.0px;width:84.3px"></div>
<div class="td" style="left:574.3px;width:43.3px"></div>
<div class="td" style="left:617.6px;width:88.7px"></div>
<div class="td" style="left:706.3px;width:84.2px"></div>
<div class="td" style="left:790.5px;width:118.3px">Ca 1 | Ca 2 | Ca 3 |</div>
<div class="td" style="left:908.8px;width:91.5px"><svg width="12" height="12" viewBox="0 0 12 12" style="margin-left:0.5px;margin-top:-1px"><circle cx="6" cy="6" r="4.95" fill="none" stroke="#18a05c" stroke-width="1.55"/><path d="M3.5 5.8 L5.3 7.6 L8.6 4.2" fill="none" stroke="#18a05c" stroke-width="1.9"/></svg></div>
<div class="td td2" style="left:1000.3px;width:122.8px"><div style="height:13.8px">thuynt</div><div style="height:13.8px">25 / 09 / 2023 16:59</div></div>
<div class="abs" style="left:1132.6px;top:12.5px;width:80px;height:11px"><div style="position:absolute;left:0;top:0;width:100%;height:100%;opacity:0.11"><svg class="ic" style="left:0px;top:0px" width="13" height="11" viewBox="0 0 13 11"><path d="M6.5 1.1 H2.3 Q1 1.1 1 2.4 V8.6 Q1 9.9 2.3 9.9 H7.7 Q9 9.9 9 8.6 V6.6" fill="none" stroke="#1677ee" stroke-width="1.25"/><path d="M3.9 7.3 L4.3 5.4 L9.3 0.4 L11 2.1 L6 7.1 Z" fill="#1677ee"/></svg><svg class="ic" style="left:22.4px;top:1.6px" width="13.6" height="8.6" viewBox="0 0 13 9" preserveAspectRatio="none"><path d="M0.4 3.5 L3 0.3 L5.6 3.5 H4.3 V6.3 H7.2 L8.2 8 H1.7 V3.5 Z" fill="#1677ee"/><path d="M12.1 4.6 L9.5 7.9 L6.9 4.6 H8.2 V2 H5.6 L4.6 0.3 H10.8 V4.6 Z" fill="#1677ee"/></svg><svg class="ic" style="left:45.6px;top:0px" width="10" height="11" viewBox="0 0 10 11"><path d="M3 1.6 V0.3 H6.6 V1.6" fill="none" stroke="#1677ee" stroke-width="1"/><rect x="0.3" y="1.4" width="9" height="1.4" fill="#1677ee"/><path d="M1.1 3.3 H8.5 V9.2 Q8.5 10 7.7 10 H1.9 Q1.1 10 1.1 9.2 Z" fill="#1677ee"/><path d="M3.3 4.3 V9 M4.8 4.3 V9 M6.3 4.3 V9" stroke="#deebfc" stroke-opacity="0.55" stroke-width="0.6"/></svg><svg class="ic" style="left:66px;top:-0.7px" width="12" height="12" viewBox="0 0 12 12"><ellipse cx="3.4" cy="3.1" rx="1.9" ry="2.35" fill="none" stroke="#1677ee" stroke-width="1.15"/><path d="M2.4 5.6 Q0.6 6.6 0.9 8.7 Q1.2 10.8 3.5 10.8 Q6.1 10.8 6.2 8.6 Q6.2 6.8 3.8 5.8" fill="none" stroke="#1677ee" stroke-width="1.15"/><path d="M4.2 0.8 H6.3" stroke="#1677ee" stroke-width="1"/><path d="M7 5 H11.6 M9.3 2.7 V7.3" stroke="#1677ee" stroke-width="0.75"/></svg></div></div>
</div>
<div class="row" style="top:463.59px;height:36.57px;background:#f2f2f2">
<div class="td" style="left:0.0px;width:49.1px">8</div>
<div class="td" style="left:49.1px;width:46.0px">64690</div>
<div class="td" style="left:95.1px;width:143.4px">Kho vận (phuongq)</div>
<div class="td" style="left:238.5px;width:81.9px">Warehouse</div>
<div class="td" style="left:320.4px;width:87.2px"></div>
<div class="td" style="left:407.6px;width:82.4px"></div>
<div class="td" style="left:490.0px;width:84.3px"></div>
<div class="td" style="left:574.3px;width:43.3px"></div>
<div class="td" style="left:617.6px;width:88.7px"></div>
<div class="td" style="left:706.3px;width:84.2px"></div>
<div class="td" style="left:790.5px;width:118.3px">Ca 1 | Ca 2 | Ca 3 |</div>
<div class="td" style="left:908.8px;width:91.5px"><svg width="12" height="12" viewBox="0 0 12 12" style="margin-left:0.5px;margin-top:-1px"><circle cx="6" cy="6" r="4.95" fill="none" stroke="#18a05c" stroke-width="1.55"/><path d="M3.5 5.8 L5.3 7.6 L8.6 4.2" fill="none" stroke="#18a05c" stroke-width="1.9"/></svg></div>
<div class="td td2" style="left:1000.3px;width:122.8px"><div style="height:13.8px">thuynt</div><div style="height:13.8px">25 / 09 / 2023 16:59</div></div>
<div class="abs" style="left:1132.6px;top:12.5px;width:80px;height:11px"><div style="position:absolute;left:0;top:0;width:100%;height:100%;opacity:0.11"><svg class="ic" style="left:0px;top:0px" width="13" height="11" viewBox="0 0 13 11"><path d="M6.5 1.1 H2.3 Q1 1.1 1 2.4 V8.6 Q1 9.9 2.3 9.9 H7.7 Q9 9.9 9 8.6 V6.6" fill="none" stroke="#1677ee" stroke-width="1.25"/><path d="M3.9 7.3 L4.3 5.4 L9.3 0.4 L11 2.1 L6 7.1 Z" fill="#1677ee"/></svg><svg class="ic" style="left:22.4px;top:1.6px" width="13.6" height="8.6" viewBox="0 0 13 9" preserveAspectRatio="none"><path d="M0.4 3.5 L3 0.3 L5.6 3.5 H4.3 V6.3 H7.2 L8.2 8 H1.7 V3.5 Z" fill="#1677ee"/><path d="M12.1 4.6 L9.5 7.9 L6.9 4.6 H8.2 V2 H5.6 L4.6 0.3 H10.8 V4.6 Z" fill="#1677ee"/></svg><svg class="ic" style="left:45.6px;top:0px" width="10" height="11" viewBox="0 0 10 11"><path d="M3 1.6 V0.3 H6.6 V1.6" fill="none" stroke="#1677ee" stroke-width="1"/><rect x="0.3" y="1.4" width="9" height="1.4" fill="#1677ee"/><path d="M1.1 3.3 H8.5 V9.2 Q8.5 10 7.7 10 H1.9 Q1.1 10 1.1 9.2 Z" fill="#1677ee"/><path d="M3.3 4.3 V9 M4.8 4.3 V9 M6.3 4.3 V9" stroke="#deebfc" stroke-opacity="0.55" stroke-width="0.6"/></svg><svg class="ic" style="left:66px;top:-0.7px" width="12" height="12" viewBox="0 0 12 12"><ellipse cx="3.4" cy="3.1" rx="1.9" ry="2.35" fill="none" stroke="#1677ee" stroke-width="1.15"/><path d="M2.4 5.6 Q0.6 6.6 0.9 8.7 Q1.2 10.8 3.5 10.8 Q6.1 10.8 6.2 8.6 Q6.2 6.8 3.8 5.8" fill="none" stroke="#1677ee" stroke-width="1.15"/><path d="M4.2 0.8 H6.3" stroke="#1677ee" stroke-width="1"/><path d="M7 5 H11.6 M9.3 2.7 V7.3" stroke="#1677ee" stroke-width="0.75"/></svg></div></div>
</div>
<div class="row" style="top:500.16px;height:36.57px;background:#fff">
<div class="td" style="left:0.0px;width:49.1px">9</div>
<div class="td" style="left:49.1px;width:46.0px">64689</div>
<div class="td" style="left:95.1px;width:143.4px">Ngô Bích (bichn)</div>
<div class="td" style="left:238.5px;width:81.9px">CALLSTAFF</div>
<div class="td" style="left:320.4px;width:87.2px"></div>
<div class="td" style="left:407.6px;width:82.4px"></div>
<div class="td" style="left:490.0px;width:84.3px"></div>
<div class="td" style="left:574.3px;width:43.3px"></div>
<div class="td" style="left:617.6px;width:88.7px"></div>
<div class="td" style="left:706.3px;width:84.2px"></div>
<div class="td" style="left:790.5px;width:118.3px">Ca 1 | Ca 2 | Ca 3 |</div>
<div class="td" style="left:908.8px;width:91.5px"><svg width="12" height="12" viewBox="0 0 12 12" style="margin-left:0.5px;margin-top:-1px"><circle cx="6" cy="6" r="4.95" fill="none" stroke="#18a05c" stroke-width="1.55"/><path d="M3.5 5.8 L5.3 7.6 L8.6 4.2" fill="none" stroke="#18a05c" stroke-width="1.9"/></svg></div>
<div class="td td2" style="left:1000.3px;width:122.8px"><div style="height:13.8px"></div><div style="height:13.8px">19 / 09 / 2023 13:55</div></div>
<div class="abs" style="left:1132.6px;top:12.5px;width:80px;height:11px"><div style="position:absolute;left:0;top:0;width:100%;height:100%;opacity:0.11"><svg class="ic" style="left:0px;top:0px" width="13" height="11" viewBox="0 0 13 11"><path d="M6.5 1.1 H2.3 Q1 1.1 1 2.4 V8.6 Q1 9.9 2.3 9.9 H7.7 Q9 9.9 9 8.6 V6.6" fill="none" stroke="#1677ee" stroke-width="1.25"/><path d="M3.9 7.3 L4.3 5.4 L9.3 0.4 L11 2.1 L6 7.1 Z" fill="#1677ee"/></svg><svg class="ic" style="left:22.4px;top:1.6px" width="13.6" height="8.6" viewBox="0 0 13 9" preserveAspectRatio="none"><path d="M0.4 3.5 L3 0.3 L5.6 3.5 H4.3 V6.3 H7.2 L8.2 8 H1.7 V3.5 Z" fill="#1677ee"/><path d="M12.1 4.6 L9.5 7.9 L6.9 4.6 H8.2 V2 H5.6 L4.6 0.3 H10.8 V4.6 Z" fill="#1677ee"/></svg><svg class="ic" style="left:45.6px;top:0px" width="10" height="11" viewBox="0 0 10 11"><path d="M3 1.6 V0.3 H6.6 V1.6" fill="none" stroke="#1677ee" stroke-width="1"/><rect x="0.3" y="1.4" width="9" height="1.4" fill="#1677ee"/><path d="M1.1 3.3 H8.5 V9.2 Q8.5 10 7.7 10 H1.9 Q1.1 10 1.1 9.2 Z" fill="#1677ee"/><path d="M3.3 4.3 V9 M4.8 4.3 V9 M6.3 4.3 V9" stroke="#deebfc" stroke-opacity="0.55" stroke-width="0.6"/></svg><svg class="ic" style="left:66px;top:-0.7px" width="12" height="12" viewBox="0 0 12 12"><ellipse cx="3.4" cy="3.1" rx="1.9" ry="2.35" fill="none" stroke="#1677ee" stroke-width="1.15"/><path d="M2.4 5.6 Q0.6 6.6 0.9 8.7 Q1.2 10.8 3.5 10.8 Q6.1 10.8 6.2 8.6 Q6.2 6.8 3.8 5.8" fill="none" stroke="#1677ee" stroke-width="1.15"/><path d="M4.2 0.8 H6.3" stroke="#1677ee" stroke-width="1"/><path d="M7 5 H11.6 M9.3 2.7 V7.3" stroke="#1677ee" stroke-width="0.75"/></svg></div></div>
</div>
<div class="row" style="top:536.73px;height:36.57px;background:#f2f2f2">
<div class="td" style="left:0.0px;width:49.1px">10</div>
<div class="td" style="left:49.1px;width:46.0px">64687</div>
<div class="td" style="left:95.1px;width:143.4px">Kế Toán (ketoan11)</div>
<div class="td" style="left:238.5px;width:81.9px">Accounting</div>
<div class="td" style="left:320.4px;width:87.2px"></div>
<div class="td" style="left:407.6px;width:82.4px"></div>
<div class="td" style="left:490.0px;width:84.3px"></div>
<div class="td" style="left:574.3px;width:43.3px"></div>
<div class="td" style="left:617.6px;width:88.7px"></div>
<div class="td" style="left:706.3px;width:84.2px"></div>
<div class="td" style="left:790.5px;width:118.3px">Ca 1 | Ca 2 | Ca 3 |</div>
<div class="td" style="left:908.8px;width:91.5px"><svg width="12" height="12" viewBox="0 0 12 12" style="margin-left:0.5px;margin-top:-1px"><circle cx="6" cy="6" r="4.95" fill="none" stroke="#18a05c" stroke-width="1.55"/><path d="M3.5 5.8 L5.3 7.6 L8.6 4.2" fill="none" stroke="#18a05c" stroke-width="1.9"/></svg></div>
<div class="td td2" style="left:1000.3px;width:122.8px"><div style="height:13.8px"></div><div style="height:13.8px">19 / 09 / 2023 13:49</div></div>
<div class="abs" style="left:1132.6px;top:12.5px;width:80px;height:11px"><div style="position:absolute;left:0;top:0;width:100%;height:100%;opacity:0.11"><svg class="ic" style="left:0px;top:0px" width="13" height="11" viewBox="0 0 13 11"><path d="M6.5 1.1 H2.3 Q1 1.1 1 2.4 V8.6 Q1 9.9 2.3 9.9 H7.7 Q9 9.9 9 8.6 V6.6" fill="none" stroke="#1677ee" stroke-width="1.25"/><path d="M3.9 7.3 L4.3 5.4 L9.3 0.4 L11 2.1 L6 7.1 Z" fill="#1677ee"/></svg><svg class="ic" style="left:22.4px;top:1.6px" width="13.6" height="8.6" viewBox="0 0 13 9" preserveAspectRatio="none"><path d="M0.4 3.5 L3 0.3 L5.6 3.5 H4.3 V6.3 H7.2 L8.2 8 H1.7 V3.5 Z" fill="#1677ee"/><path d="M12.1 4.6 L9.5 7.9 L6.9 4.6 H8.2 V2 H5.6 L4.6 0.3 H10.8 V4.6 Z" fill="#1677ee"/></svg><svg class="ic" style="left:45.6px;top:0px" width="10" height="11" viewBox="0 0 10 11"><path d="M3 1.6 V0.3 H6.6 V1.6" fill="none" stroke="#1677ee" stroke-width="1"/><rect x="0.3" y="1.4" width="9" height="1.4" fill="#1677ee"/><path d="M1.1 3.3 H8.5 V9.2 Q8.5 10 7.7 10 H1.9 Q1.1 10 1.1 9.2 Z" fill="#1677ee"/><path d="M3.3 4.3 V9 M4.8 4.3 V9 M6.3 4.3 V9" stroke="#deebfc" stroke-opacity="0.55" stroke-width="0.6"/></svg><svg class="ic" style="left:66px;top:-0.7px" width="12" height="12" viewBox="0 0 12 12"><ellipse cx="3.4" cy="3.1" rx="1.9" ry="2.35" fill="none" stroke="#1677ee" stroke-width="1.15"/><path d="M2.4 5.6 Q0.6 6.6 0.9 8.7 Q1.2 10.8 3.5 10.8 Q6.1 10.8 6.2 8.6 Q6.2 6.8 3.8 5.8" fill="none" stroke="#1677ee" stroke-width="1.15"/><path d="M4.2 0.8 H6.3" stroke="#1677ee" stroke-width="1"/><path d="M7 5 H11.6 M9.3 2.7 V7.3" stroke="#1677ee" stroke-width="0.75"/></svg></div></div>
</div>
<div class="row" style="top:573.30px;height:36.57px;background:#fff">
<div class="td" style="left:0.0px;width:49.1px">11</div>
<div class="td" style="left:49.1px;width:46.0px"></div>
<div class="td" style="left:95.1px;width:143.4px"></div>
<div class="td" style="left:238.5px;width:81.9px"></div>
<div class="td" style="left:320.4px;width:87.2px"></div>
<div class="td" style="left:407.6px;width:82.4px"></div>
<div class="td" style="left:490.0px;width:84.3px"></div>
<div class="td" style="left:574.3px;width:43.3px"></div>
<div class="td" style="left:617.6px;width:88.7px"></div>
<div class="td" style="left:706.3px;width:84.2px"><svg width="12" height="12" viewBox="0 0 12 12" style="margin-left:0.5px;margin-top:-1px"><circle cx="6" cy="6" r="4.95" fill="none" stroke="#18a05c" stroke-width="1.55"/><path d="M3.5 5.8 L5.3 7.6 L8.6 4.2" fill="none" stroke="#18a05c" stroke-width="1.9"/></svg></div>
<div class="td" style="left:790.5px;width:118.3px">Ca 1 | Ca 2 | Ca 3 |</div>
<div class="td" style="left:908.8px;width:91.5px"><svg width="12" height="12" viewBox="0 0 12 12" style="margin-left:0.5px;margin-top:-1px"><circle cx="6" cy="6" r="4.95" fill="none" stroke="#18a05c" stroke-width="1.55"/><path d="M3.5 5.8 L5.3 7.6 L8.6 4.2" fill="none" stroke="#18a05c" stroke-width="1.9"/></svg></div>
<div class="td td2" style="left:1000.3px;width:122.8px"><div style="height:13.8px">thuynt</div><div style="height:13.8px">19 / 09 / 2023 13:40</div></div>
<div class="abs" style="left:1132.6px;top:12.5px;width:80px;height:11px"><div style="position:absolute;left:0;top:0;width:100%;height:100%;opacity:0.11"><svg class="ic" style="left:0px;top:0px" width="13" height="11" viewBox="0 0 13 11"><path d="M6.5 1.1 H2.3 Q1 1.1 1 2.4 V8.6 Q1 9.9 2.3 9.9 H7.7 Q9 9.9 9 8.6 V6.6" fill="none" stroke="#1677ee" stroke-width="1.25"/><path d="M3.9 7.3 L4.3 5.4 L9.3 0.4 L11 2.1 L6 7.1 Z" fill="#1677ee"/></svg><svg class="ic" style="left:22.4px;top:1.6px" width="13.6" height="8.6" viewBox="0 0 13 9" preserveAspectRatio="none"><path d="M0.4 3.5 L3 0.3 L5.6 3.5 H4.3 V6.3 H7.2 L8.2 8 H1.7 V3.5 Z" fill="#1677ee"/><path d="M12.1 4.6 L9.5 7.9 L6.9 4.6 H8.2 V2 H5.6 L4.6 0.3 H10.8 V4.6 Z" fill="#1677ee"/></svg><svg class="ic" style="left:45.6px;top:0px" width="10" height="11" viewBox="0 0 10 11"><path d="M3 1.6 V0.3 H6.6 V1.6" fill="none" stroke="#1677ee" stroke-width="1"/><rect x="0.3" y="1.4" width="9" height="1.4" fill="#1677ee"/><path d="M1.1 3.3 H8.5 V9.2 Q8.5 10 7.7 10 H1.9 Q1.1 10 1.1 9.2 Z" fill="#1677ee"/><path d="M3.3 4.3 V9 M4.8 4.3 V9 M6.3 4.3 V9" stroke="#deebfc" stroke-opacity="0.55" stroke-width="0.6"/></svg><svg class="ic" style="left:66px;top:-0.7px" width="12" height="12" viewBox="0 0 12 12"><ellipse cx="3.4" cy="3.1" rx="1.9" ry="2.35" fill="none" stroke="#1677ee" stroke-width="1.15"/><path d="M2.4 5.6 Q0.6 6.6 0.9 8.7 Q1.2 10.8 3.5 10.8 Q6.1 10.8 6.2 8.6 Q6.2 6.8 3.8 5.8" fill="none" stroke="#1677ee" stroke-width="1.15"/><path d="M4.2 0.8 H6.3" stroke="#1677ee" stroke-width="1"/><path d="M7 5 H11.6 M9.3 2.7 V7.3" stroke="#1677ee" stroke-width="0.75"/></svg></div></div>
</div>
<div class="abs" style="left:27.70px;top:207.6px;width:1.4px;height:384px;background:#eaeaea"></div>
<div class="abs" style="left:76.80px;top:207.6px;width:1.4px;height:384px;background:#eaeaea"></div>
<div class="abs" style="left:122.80px;top:207.6px;width:1.4px;height:384px;background:#eaeaea"></div>
<div class="abs" style="left:266.20px;top:207.6px;width:1.4px;height:384px;background:#eaeaea"></div>
<div class="abs" style="left:348.10px;top:207.6px;width:1.4px;height:384px;background:#eaeaea"></div>
<div class="abs" style="left:435.30px;top:207.6px;width:1.4px;height:384px;background:#eaeaea"></div>
<div class="abs" style="left:517.70px;top:207.6px;width:1.4px;height:384px;background:#eaeaea"></div>
<div class="abs" style="left:602.00px;top:207.6px;width:1.4px;height:384px;background:#eaeaea"></div>
<div class="abs" style="left:645.30px;top:207.6px;width:1.4px;height:384px;background:#eaeaea"></div>
<div class="abs" style="left:734.00px;top:207.6px;width:1.4px;height:384px;background:#eaeaea"></div>
<div class="abs" style="left:818.20px;top:207.6px;width:1.4px;height:384px;background:#eaeaea"></div>
<div class="abs" style="left:936.50px;top:207.6px;width:1.4px;height:384px;background:#eaeaea"></div>
<div class="abs" style="left:1028.00px;top:207.6px;width:1.4px;height:384px;background:#eaeaea"></div>
<div class="abs" style="left:1150.80px;top:207.6px;width:1.4px;height:384px;background:#eaeaea"></div>
<div class="abs" style="left:1246.20px;top:207.6px;width:1.4px;height:384px;background:#eaeaea"></div>
<div class="abs" style="left:28.3px;top:243.87px;width:1218.5px;height:1px;background:#e4e4e4"></div>
<div class="abs" style="left:28.3px;top:280.44px;width:1218.5px;height:1px;background:#e4e4e4"></div>
<div class="abs" style="left:28.3px;top:317.01px;width:1218.5px;height:1px;background:#e4e4e4"></div>
<div class="abs" style="left:28.3px;top:353.58px;width:1218.5px;height:1px;background:#e4e4e4"></div>
<div class="abs" style="left:28.3px;top:390.15px;width:1218.5px;height:1px;background:#e4e4e4"></div>
<div class="abs" style="left:28.3px;top:426.72px;width:1218.5px;height:1px;background:#e4e4e4"></div>
<div class="abs" style="left:28.3px;top:463.29px;width:1218.5px;height:1px;background:#e4e4e4"></div>
<div class="abs" style="left:28.3px;top:499.86px;width:1218.5px;height:1px;background:#e4e4e4"></div>
<div class="abs" style="left:28.3px;top:536.43px;width:1218.5px;height:1px;background:#e4e4e4"></div>
<div class="abs" style="left:28.3px;top:573.00px;width:1218.5px;height:1px;background:#e4e4e4"></div>
<div class="abs" style="left:1153px;top:250.4px;width:26px;height:23px;border:2.2px solid #d64f4f;border-radius:4px"></div>
<svg class="abs" style="left:0;top:0" width="1280" height="607"><path d="M1042.3 299.6 L1150 272.5" stroke="#d64f4f" stroke-width="2.2" stroke-linecap="round"/><path d="M1140.3 266.4 L1151 272.6 L1144 282.5" fill="none" stroke="#d64f4f" stroke-width="2.2" stroke-linecap="round" stroke-linejoin="round"/></svg>
<div class="abs" style="left:1219.4px;top:162.1px;width:38.7px;height:40px;border-radius:8.5px;background:rgba(0,0,10,.27);border:2.8px solid rgba(190,190,196,.45);background-clip:padding-box"></div>
<svg class="abs" style="left:1218px;top:160px" width="42" height="42" viewBox="0 0 42 42"><path d="M14 18.8 L20.8 10.9 L28.3 12.4 L20.3 22.6 L15 21.8 Q12.6 21 14 18.8 Z" fill="#cde2fb" fill-opacity="0.9"/><path d="M23.6 20 Q25.5 18.8 27.6 20.2 Q29 21.5 28 22.8 L20.8 31.7 L12.8 30.3 Z" fill="#5a9ff0" fill-opacity="0.85"/><path d="M23.6 20 Q25.5 18.8 27.6 20.2 Q29 21.5 28 22.8 L26.5 24.5 L20 23.2 Z" fill="#e8f2fd" fill-opacity="0.9"/></svg>
<div class="abs" style="left:1197.5px;top:529.7px;width:51.3px;height:51.3px;border-radius:50%;background:#1e88f0;box-shadow:0 0 0 1.5px #b9d8fb"></div>
<svg class="abs" style="left:1211px;top:544.5px" width="27" height="21" viewBox="0 0 27 21"><path d="M2 1 H17.8 Q19.3 1 19.3 2.5 V11.8 Q19.3 13.3 17.8 13.3 H8 L5 16.3 V13.3 H2 Q0.8 13.3 0.8 11.8 V2.5 Q0.8 1 2 1 Z" fill="none" stroke="#fff" stroke-width="1.6"/><path d="M4.6 5.6 H14.6 M6 8.9 H13.6" stroke="#fff" stroke-width="1.5"/><path d="M22.2 5.6 Q24.4 5.6 24.4 7.6 V14.8 Q24.4 16.3 22.9 16.3 H21.2 V18.6 L18.8 16.3 H12.2 L10.8 14.8" fill="none" stroke="#fff" stroke-width="1.6"/></svg>
<div class="abs" style="left:15px;top:573.5px;width:432.3px;height:17px;background:#fcdcc8;font-size:9.5px;color:#222;line-height:17px;padding-left:3.8px;white-space:nowrap;overflow:hidden">javascript:__doPostBack('dnn$ctr1429$Main$DanhSachNhanVien$rptDataChucVu$ctl01$btnEdit','')</div>
<div class="abs" style="left:0;top:590.6px;width:1280px;height:20px;background:#fff"></div>
<div class="abs" style="left:1259.4px;top:15.5px;width:5.2px;height:575px;background:#f6f6f6;border-radius:0 0 2.5px 2.5px"></div>
<div class="abs" style="left:1259.4px;top:15.5px;width:5.2px;height:198px;background:#c9c9c9;border-radius:0 0 2.5px 2.5px"></div>
</body></html>
